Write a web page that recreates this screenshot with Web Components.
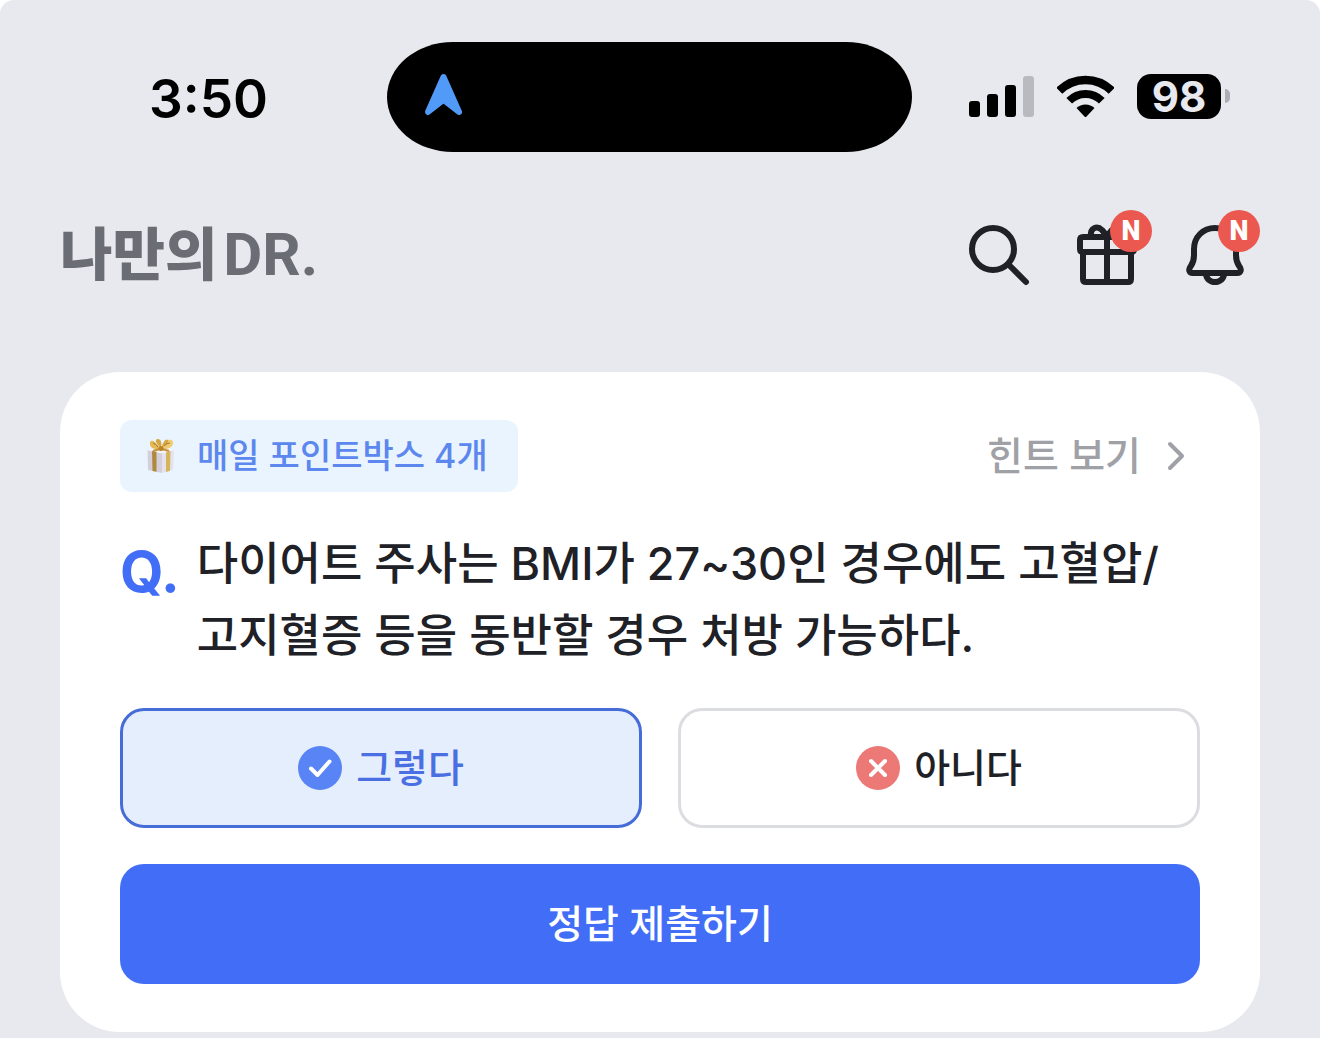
<!DOCTYPE html>
<html lang="ko">
<head>
<meta charset="utf-8">
<meta name="viewport" content="width=device-width, initial-scale=1">
<title>나만의 DR.</title>
<style>
  body {
    margin: 0;
    background: #fff;
    color: #202126;
    font-family: Inter, "Noto Sans CJK KR", sans-serif;
    font-weight: 500;
  }
</style>
</head>
<body>
<health-app>
  <status-bar slot="status" time="3:50" battery="98"></status-bar>
  <app-header slot="header"></app-header>
  <quiz-card>
    <point-chip slot="chip">매일 포인트박스 4개</point-chip>
    <hint-link slot="hint">힌트 보기</hint-link>
    <quiz-question slot="question">다이어트 주사는 BMI가 27~30인 경우에도 고혈압/<br>고지혈증 등을 동반할 경우 처방 가능하다.</quiz-question>
    <answer-group slot="answers"></answer-group>
    <submit-button slot="submit">정답 제출하기</submit-button>
  </quiz-card>
</health-app>

<script>
const define = (name, html, setup) => {
  const template = document.createElement('template');
  template.innerHTML = html;
  customElements.define(name, class extends HTMLElement {
    constructor() {
      super();
      this.attachShadow({ mode: 'open' }).append(template.content.cloneNode(true));
    }
    connectedCallback() {
      if (setup) setup(this, this.shadowRoot);
    }
  });
};

define('health-app', `
  <style>
    :host { display: block; box-sizing: border-box; min-height: 100vh; padding-bottom: 6px;
            background: #e8e9ee; border-radius: 14px 14px 0 0; }
    main { padding: 0 60px; }
  </style>
  <slot name="status"></slot>
  <slot name="header"></slot>
  <main><slot></slot></main>
`);

define('status-bar', `
  <style>
    :host { display: grid; grid-template-columns: 1fr 525px 1fr; padding: 42px 21px 0 0; color: #000; }
    .time { display: flex; align-items: center; justify-content: center; padding: 4px 0 0 30px;
            font-size: 53px; font-weight: 600; line-height: 106px; }
    .island { height: 110px; box-sizing: border-box; padding: 0 0 2px 36px; display: flex; align-items: center;
              background: #000; border-radius: 66px / 55px; }
    .signals { display: flex; align-items: center; gap: 23px; padding: 0 0 2px 57px; }
    svg { display: block; flex: none; }
    .power { display: flex; align-items: center; gap: 4px; }
    .level { width: 84px; height: 45px; border-radius: 14px; background: #000; color: #e8e9ee;
             font-size: 42px; font-weight: 700; line-height: 45px; text-align: center; }
    .nub { width: 5px; height: 14px; border-radius: 0 5px 5px 0; background: #adaeb3; }
  </style>
  <div class="time"></div>
  <div class="island">
    <svg width="42" height="46" viewBox="0 0 42 46" aria-hidden="true">
      <path d="M20.500 4 L36 39 L20.500 27 L5 39 Z" fill="#529af8" stroke="#529af8" stroke-width="6" stroke-linejoin="round"/>
    </svg>
  </div>
  <div class="signals">
    <svg width="65" height="41" viewBox="0 0 65 41" aria-label="신호">
      <rect y="25" width="11" height="16" rx="3"/>
      <rect x="18" y="18" width="11" height="23" rx="3"/>
      <rect x="36" y="9" width="11" height="32" rx="3"/>
      <rect x="54" width="11" height="41" rx="3" fill="#b9babf"/>
    </svg>
    <svg width="57" height="43" viewBox="0 0 57 43" aria-label="와이파이">
      <g fill="none" stroke="#000">
        <path d="M2.300 15.800 A37 37 0 0 1 54.700 15.800" stroke-width="8.500"/>
        <path d="M12.200 25.700 A23 23 0 0 1 44.800 25.700" stroke-width="8"/>
      </g>
      <path d="M19.500 33 A13 13 0 0 1 37.500 33 L29.500 41.500 Q28.500 42.500 27.500 41.500 Z"/>
    </svg>
    <div class="power"><div class="level"></div><div class="nub"></div></div>
  </div>
`, (host, root) => {
  root.querySelector('.time').textContent = host.getAttribute('time');
  root.querySelector('.level').textContent = host.getAttribute('battery');
});

define('icon-button', `
  <style>
    :host { display: block; position: relative; color: #202126; }
    button { display: block; padding: 0; border: 0; background: none; color: inherit; font: inherit; cursor: pointer; }
    ::slotted(svg) { display: block; width: 72px; height: 72px; }
    .badge { position: absolute; top: -9px; right: -9px; width: 42px; height: 42px; border-radius: 50%;
             background: #eb5850; color: #fff; font-family: Roboto, sans-serif; font-size: 27px; font-weight: 900; line-height: 42px; text-align: center; }
    .badge:empty { display: none; }
  </style>
  <button type="button"><slot></slot><span class="badge"></span></button>
`, (host, root) => {
  root.querySelector('button').setAttribute('aria-label', host.getAttribute('label'));
  root.querySelector('.badge').textContent = host.getAttribute('badge') || '';
});

define('brand-logo', `
  <style>
    :host { display: block; color: #6b6d74; }
    a { display: flex; align-items: baseline; gap: 6px; height: 72px; color: inherit; text-decoration: none;
        font-size: 57px; font-weight: 900; line-height: 72px; }
    .mark { font-family: Roboto, sans-serif; font-size: 60px; font-weight: 700; }
  </style>
  <a href="#"><span>나만의</span><span class="mark">DR.</span></a>
`);

define('app-header', `
  <style>
    :host { display: flex; justify-content: space-between; align-items: center; padding: 67px 69px 81px 60px; }
    nav { display: flex; gap: 36px; }
  </style>
  <brand-logo></brand-logo>
  <nav>
    <icon-button label="검색">
      <svg viewBox="0 0 72 72" fill="none" stroke="currentColor" stroke-width="6" stroke-linecap="round">
        <circle cx="30" cy="30" r="21"/><path d="M45.500 45.500 L63 63"/>
      </svg>
    </icon-button>
    <icon-button label="선물" badge="N">
      <svg viewBox="0 0 72 72" fill="none" stroke="currentColor" stroke-width="6" stroke-linecap="round" stroke-linejoin="round">
        <path d="M12 18 H60 Q63 18 63 21 V30 Q63 33 60 33 H12 Q9 33 9 30 V21 Q9 18 12 18 Z"/>
        <path d="M12 33 V60 Q12 63 15 63 H57 Q60 63 60 60 V33 M36 18 V63"/>
        <path d="M20 17 C19 9 26 6 31 11 L36 17 L41 11 C46 6 53 9 52 17"/>
      </svg>
    </icon-button>
    <icon-button label="알림" badge="N">
      <svg viewBox="0 0 72 72" fill="none" stroke="currentColor" stroke-width="6" stroke-linecap="round" stroke-linejoin="round">
        <path d="M36 9 C24 9 15 18 15 30 V36 C15 43 13.500 44.500 11.500 47.500 C9 51 10.500 54 13.500 54 H58.500 C61.500 54 63 51 60.500 47.500 C58.500 44.500 57 43 57 36 V30 C57 18 48 9 36 9 Z"/>
        <path d="M27 55 A9 8 0 0 0 45 55"/>
      </svg>
    </icon-button>
  </nav>
`);

define('quiz-card', `
  <style>
    :host { display: flex; flex-direction: column; gap: 36px; padding: 48px 60px; background: #fff; border-radius: 60px; }
    .top { display: flex; justify-content: space-between; align-items: center; }
  </style>
  <div class="top"><slot name="chip"></slot><slot name="hint"></slot></div>
  <slot name="question"></slot>
  <slot name="answers"></slot>
  <slot name="submit"></slot>
`);

define('point-chip', `
  <style>
    :host { display: flex; align-items: center; gap: 22px; padding: 0 30px 0 26px; border-radius: 12px;
            background: #eaf4fe; color: #5b87ee; font-size: 34px; line-height: 72px; }
    svg { display: block; flex: none; }
  </style>
  <svg width="29" height="36" viewBox="0 0 29 36" aria-hidden="true">
    <path d="M1.500 12 L16 15 V35 L2 32 Z" fill="#d3cfdd"/>
    <path d="M16 15 L28 12 L27 32 L16 35 Z" fill="#e6e2ec"/>
    <path d="M1 12 L14 10 L28 12 L16 15.500 Z" fill="#f6f3f8"/>
    <path d="M6 13 L10.500 14 V33.800 L6.500 33 Z" fill="#b08a3c"/>
    <path d="M20 14.500 L24.500 13 L24 32.800 L20 33.900 Z" fill="#d4b45c"/>
    <path d="M14 10 C9 2 4 1 4 5 C3 9 8 12 14 11 Z" fill="#e4b955"/>
    <path d="M15 10 C18 1 26 0 27 4 C28 9 21 12 15 11 Z" fill="#efcc72"/>
    <path d="M14 9 C10 5 8 1 12 1 C15 1 16 5 15 9 Z M16 9 C17 4 20 0 22 2 C23 4 20 8 16 9 Z" fill="#d6a640"/>
    <path d="M14 11 L7 13 M16 11 L23 13" stroke="#c2913a" stroke-width="2"/>
    <circle cx="15" cy="10.500" r="2.500" fill="#b9832b"/>
    <path d="M7 5 Q10 6 12 9 M18 8 Q21 5 24 5" fill="none" stroke="#a87927"/>
  </svg>
  <span><slot></slot></span>
`);

define('hint-link', `
  <style>
    :host { display: block; padding-right: 6px; }
    a { display: flex; align-items: center; gap: 17px; color: #a0a1a7; text-decoration: none; font-size: 39px; line-height: 72px; }
    svg { display: block; flex: none; }
  </style>
  <a href="#"><slot></slot>
    <svg width="36" height="36" viewBox="0 0 36 36" fill="none" stroke="currentColor" stroke-width="4" stroke-linecap="round" stroke-linejoin="round" aria-hidden="true"><path d="M12 6 L24 18 L12 30"/></svg>
  </a>
`);

define('quiz-question', `
  <style>
    :host { display: flex; gap: 17px; }
    .q { color: #426df6; font-size: 56px; font-weight: 700; line-height: 88px; }
    h2 { margin: 0; flex: 1; font-size: 45px; font-weight: 500; line-height: 72px; word-break: keep-all; }
  </style>
  <span class="q">Q.</span>
  <h2><slot></slot></h2>
`);

define('answer-group', `
  <style>
    :host { display: block; }
    fieldset { display: grid; grid-template-columns: 1fr 1fr; gap: 36px; margin: 0; padding: 0; border: 0; min-width: 0; }
    label { position: relative; display: flex; align-items: center; justify-content: center; gap: 14px;
            box-sizing: border-box; height: 120px; border: 3px solid #dcdde1; border-radius: 24px;
            font-size: 39px; line-height: 72px; cursor: pointer; }
    input { position: absolute; inset: 0; margin: 0; opacity: 0; }
    label:has(:checked) { border-color: #466cd8; background: #e4eefd; color: #4a6fe2; }
    svg { display: block; flex: none; }
  </style>
  <fieldset aria-label="정답 선택">
    <label><input type="radio" name="answer" checked>
      <svg width="44" height="44" viewBox="0 0 44 44" fill="none" stroke="#fff" stroke-width="4" stroke-linecap="round" stroke-linejoin="round" aria-hidden="true"><circle cx="22" cy="22" r="22" fill="#5884f5" stroke="none"/><path d="M13 22.500 L19.500 29 L31.500 15.500"/></svg>
      <span>그렇다</span></label>
    <label><input type="radio" name="answer">
      <svg width="44" height="44" viewBox="0 0 44 44" fill="none" stroke="#fff" stroke-width="4" stroke-linecap="round" aria-hidden="true"><circle cx="22" cy="22" r="22" fill="#ec7976" stroke="none"/><path d="M15 15 L29 29 M29 15 L15 29"/></svg>
      <span>아니다</span></label>
  </fieldset>
`);

define('submit-button', `
  <style>
    :host { display: block; }
    button { display: block; width: 100%; height: 120px; padding: 0; border: 0; border-radius: 24px;
             background: #416df7; color: #fff; font: inherit; font-size: 39px; line-height: 72px; cursor: pointer; }
  </style>
  <button type="button"><slot></slot></button>
`);
</script>
</body>
</html>
